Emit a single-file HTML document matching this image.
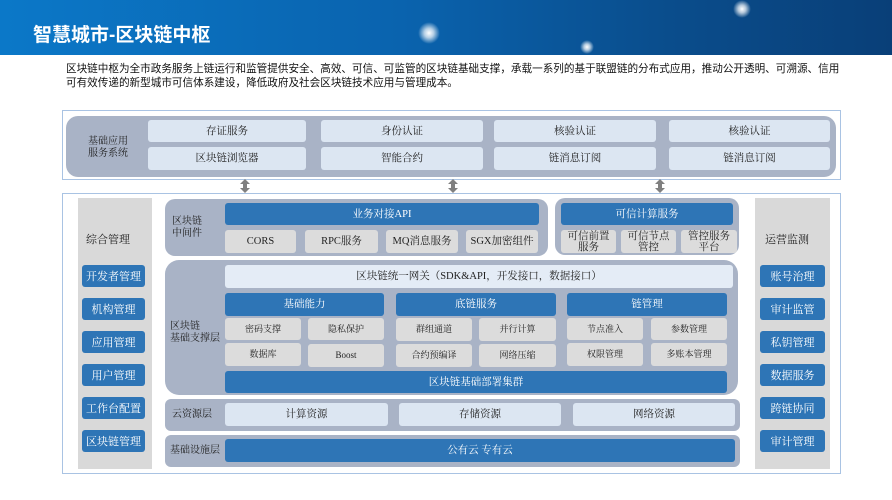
<!DOCTYPE html>
<html><head><meta charset="utf-8"><style>
*{margin:0;padding:0;box-sizing:border-box}
body{width:892px;height:500px;background:#fff;position:relative;overflow:hidden;font-family:"Liberation Serif","Noto Serif CJK SC","Noto Sans CJK SC",serif;color:#222}
.a{position:absolute}
.hd{left:0;top:0;width:892px;height:55px;background:linear-gradient(90deg,#0b78c8 0%,#0a63ae 45%,#0a4d8c 75%,#093f78 100%)}
.star{border-radius:50%;background:radial-gradient(circle,#fff 0%,rgba(255,255,255,.7) 30%,rgba(255,255,255,0) 70%)}
.t{font-family:"Liberation Sans","Noto Sans CJK SC",sans-serif;color:#fff;font-weight:bold;font-size:19px;left:33px;top:20px}
.p{font-family:"Liberation Sans","Noto Sans CJK SC",sans-serif;font-size:10.6px;left:66px;top:62px;width:780px;line-height:14px;color:#111}
.c{display:flex;align-items:center;justify-content:center;text-align:center;font-size:10.5px;line-height:11px;border-radius:3px}
.lb{background:#dce6f2}
.gy{background:#dcdcdc}
.bl{background:#2e75b6;color:#fff}
.g{background:#a9b3c6;border-radius:12px}
.lab{font-size:10px;line-height:12px;color:#222}
.btn{background:#2e75b6;color:#fff;font-size:11px;border-radius:3px;display:flex;align-items:center;justify-content:center}
</style></head><body>
<div class="a hd"></div>
<div class="a star" style="left:418px;top:22px;width:22px;height:22px"></div>
<div class="a star" style="left:580px;top:40px;width:14px;height:14px"></div>
<div class="a star" style="left:733px;top:0px;width:18px;height:18px"></div>
<div class="a t">智慧城市-区块链中枢</div>
<div class="a p">区块链中枢为全市政务服务上链运行和监管提供安全、高效、可信、可监管的区块链基础支撑，承载一系列的基于联盟链的分布式应用，推动公开透明、可溯源、信用可有效传递的新型城市可信体系建设，降低政府及社会区块链技术应用与管理成本。</div>

<div class="a" style="left:62px;top:110px;width:779px;height:70px;border:1.5px solid #a9c3e3"></div>
<div class="a g" style="left:66px;top:116px;width:770px;height:61px"></div>
<div class="a lab" style="left:88px;top:136px">基础应用<br>服务系统</div>
<div class="a c lb" style="left:148px;top:120px;width:158px;height:22px">存证服务</div>
<div class="a c lb" style="left:321px;top:120px;width:162px;height:22px">身份认证</div>
<div class="a c lb" style="left:494px;top:120px;width:162px;height:22px">核验认证</div>
<div class="a c lb" style="left:669px;top:120px;width:161px;height:22px">核验认证</div>
<div class="a c lb" style="left:148px;top:147px;width:158px;height:23px">区块链浏览器</div>
<div class="a c lb" style="left:321px;top:147px;width:162px;height:23px">智能合约</div>
<div class="a c lb" style="left:494px;top:147px;width:162px;height:23px">链消息订阅</div>
<div class="a c lb" style="left:669px;top:147px;width:161px;height:23px">链消息订阅</div>

<svg class="a" style="left:0;top:178px" width="892" height="16">
<g fill="#808080"><path d="M245 1 l-5 5 h3 v4 h-3 l5 5 l5 -5 h-3 v-4 h3z"/><path d="M453 1 l-5 5 h3 v4 h-3 l5 5 l5 -5 h-3 v-4 h3z"/><path d="M660 1 l-5 5 h3 v4 h-3 l5 5 l5 -5 h-3 v-4 h3z"/></g></svg>

<div class="a" style="left:62px;top:193px;width:779px;height:281px;border:1.5px solid #a9c3e3"></div>
<div class="a" style="left:78px;top:198px;width:74px;height:271px;background:#d9d9d9"></div>
<div class="a lab" style="left:86px;top:234px;font-size:11px">综合管理</div>
<div class="a btn" style="left:82px;top:265px;width:63px;height:22px">开发者管理</div>
<div class="a btn" style="left:82px;top:298px;width:63px;height:22px">机构管理</div>
<div class="a btn" style="left:82px;top:331px;width:63px;height:22px">应用管理</div>
<div class="a btn" style="left:82px;top:364px;width:63px;height:22px">用户管理</div>
<div class="a btn" style="left:82px;top:397px;width:63px;height:22px">工作台配置</div>
<div class="a btn" style="left:82px;top:430px;width:63px;height:22px">区块链管理</div>

<div class="a" style="left:755px;top:198px;width:75px;height:271px;background:#d9d9d9"></div>
<div class="a lab" style="left:765px;top:234px;font-size:11px">运营监测</div>
<div class="a btn" style="left:760px;top:265px;width:65px;height:22px">账号治理</div>
<div class="a btn" style="left:760px;top:298px;width:65px;height:22px">审计监管</div>
<div class="a btn" style="left:760px;top:331px;width:65px;height:22px">私钥管理</div>
<div class="a btn" style="left:760px;top:364px;width:65px;height:22px">数据服务</div>
<div class="a btn" style="left:760px;top:397px;width:65px;height:22px">跨链协同</div>
<div class="a btn" style="left:760px;top:430px;width:65px;height:22px">审计管理</div>

<div class="a g" style="left:165px;top:199px;width:383px;height:57px;border-radius:10px"></div>
<div class="a lab" style="left:172px;top:216px">区块链<br>中间件</div>
<div class="a c bl" style="left:225px;top:203px;width:314px;height:22px">业务对接API</div>
<div class="a c gy" style="left:225px;top:230px;width:71px;height:23px">CORS</div>
<div class="a c gy" style="left:305px;top:230px;width:73px;height:23px">RPC服务</div>
<div class="a c gy" style="left:386px;top:230px;width:72px;height:23px">MQ消息服务</div>
<div class="a c gy" style="left:466px;top:230px;width:72px;height:23px">SGX加密组件</div>

<div class="a g" style="left:555px;top:198px;width:184px;height:57px;border-radius:10px"></div>
<div class="a c bl" style="left:561px;top:203px;width:172px;height:22px">可信计算服务</div>
<div class="a c gy" style="left:561px;top:230px;width:55px;height:23px">可信前置<br>服务</div>
<div class="a c gy" style="left:621px;top:230px;width:55px;height:23px">可信节点<br>管控</div>
<div class="a c gy" style="left:681px;top:230px;width:56px;height:23px">管控服务<br>平台</div>

<div class="a g" style="left:165px;top:260px;width:573px;height:135px;border-radius:14px"></div>
<div class="a lab" style="left:170px;top:321px">区块链<br>基础支撑层</div>
<div class="a c" style="left:225px;top:265px;width:508px;height:23px;background:#e4ecf6">区块链统一网关（SDK&amp;API，开发接口，数据接口）</div>
<div class="a c bl" style="left:225px;top:293px;width:159px;height:23px">基础能力</div>
<div class="a c bl" style="left:396px;top:293px;width:160px;height:23px">底链服务</div>
<div class="a c bl" style="left:567px;top:293px;width:160px;height:23px">链管理</div>
<div class="a c gy" style="left:225px;top:318px;width:76px;height:22px;font-size:9px">密码支撑</div>
<div class="a c gy" style="left:308px;top:318px;width:76px;height:22px;font-size:9px">隐私保护</div>
<div class="a c gy" style="left:396px;top:318px;width:76px;height:23px;font-size:9px">群组通道</div>
<div class="a c gy" style="left:479px;top:318px;width:77px;height:23px;font-size:9px">并行计算</div>
<div class="a c gy" style="left:567px;top:318px;width:76px;height:22px;font-size:9px">节点准入</div>
<div class="a c gy" style="left:651px;top:318px;width:76px;height:22px;font-size:9px">参数管理</div>
<div class="a c gy" style="left:225px;top:343px;width:76px;height:23px;font-size:9px">数据库</div>
<div class="a c gy" style="left:308px;top:344px;width:76px;height:23px;font-size:9px">Boost</div>
<div class="a c gy" style="left:396px;top:344px;width:76px;height:23px;font-size:9px">合约预编译</div>
<div class="a c gy" style="left:479px;top:344px;width:77px;height:23px;font-size:9px">网络压缩</div>
<div class="a c gy" style="left:567px;top:343px;width:76px;height:23px;font-size:9px">权限管理</div>
<div class="a c gy" style="left:651px;top:343px;width:76px;height:23px;font-size:9px">多账本管理</div>
<div class="a c bl" style="left:225px;top:371px;width:502px;height:22px">区块链基础部署集群</div>

<div class="a g" style="left:165px;top:399px;width:575px;height:32px;border-radius:6px"></div>
<div class="a lab" style="left:172px;top:409px">云资源层</div>
<div class="a c lb" style="left:225px;top:403px;width:163px;height:23px">计算资源</div>
<div class="a c lb" style="left:399px;top:403px;width:162px;height:23px">存储资源</div>
<div class="a c lb" style="left:573px;top:403px;width:162px;height:23px">网络资源</div>

<div class="a g" style="left:165px;top:435px;width:575px;height:32px;border-radius:6px"></div>
<div class="a lab" style="left:170px;top:445px">基础设施层</div>
<div class="a c bl" style="left:225px;top:439px;width:510px;height:23px">公有云 专有云</div>
</body></html>
